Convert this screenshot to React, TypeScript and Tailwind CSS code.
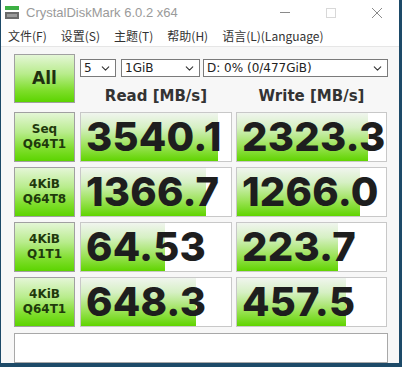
import { ChevronDown } from "lucide-react";

type Row = {
    top: string;
    bottom: string;
    read: string;
    readFill: number;
    write: string;
    writeFill: number;
};

const rows: Row[] = [
    { top: "Seq", bottom: "Q64T1", read: "3540.1", readFill: 137, write: "2323.3", writeFill: 131 },
    { top: "4KiB", bottom: "Q64T8", read: "1366.7", readFill: 125, write: "1266.0", writeFill: 123 },
    { top: "4KiB", bottom: "Q1T1", read: "64.53", readFill: 84, write: "223.7", writeFill: 101 },
    { top: "4KiB", bottom: "Q64T1", read: "648.3", readFill: 115, write: "457.5", writeFill: 109 },
];

const greenButton =
    "border border-[#a0a0a0] bg-[linear-gradient(to_bottom,#e4f6d6_0%,#b8ec8c_40%,#7fde2c_75%,#5cd400_100%)]";

const Select = ({ label, className }: { label: string; className: string }) => (
    <div
        className={`h-[18px] flex items-center justify-between border border-[#7a7a7a] bg-white pl-[3px] pr-[3px] text-[12px] text-[#222] ${className}`}
    >
        <span className="leading-none">{label}</span>
        <ChevronDown size={13} strokeWidth={2} className="text-[#333]" />
    </div>
);

const ResultBox = ({ value, fill }: { value: string; fill: number }) => (
    <div className="relative h-[50px] border border-[#c8c8c8] bg-white overflow-hidden">
        <div
            className="absolute left-0 top-0 bottom-0 bg-[linear-gradient(to_bottom,#f0f5ee_0%,#d6f0c4_30%,#9ce358_68%,#60d400_100%)]"
            style={{ width: fill }}
        />
        <div className="relative h-full flex items-center pl-[5px] font-['Inter'] font-extrabold text-[40px] tracking-[0.2px] text-[#1e1e1e] leading-none">
            {value}
        </div>
    </div>
);

const App = () => {
    return (
        <div className="w-[402px] h-[367px] bg-[#1d4a68] flex flex-col overflow-hidden">
            <div className="ml-[1px] w-[398px] h-[363px] bg-[#f7f7f7] flex flex-col">
                {/* title bar */}
                <div className="h-[25px] bg-white flex items-center">
                    <svg width="15" height="15" viewBox="0 0 15 15" className="ml-[4px]">
                        <rect x="0" y="1" width="14" height="4" fill="#3cb043" />
                        <rect x="0" y="7" width="14" height="7" fill="#6a6a6a" />
                        <rect x="2" y="9" width="10" height="3" fill="#9a9a9a" />
                    </svg>
                    <span className="ml-[6px] font-['Liberation_Sans'] text-[13px] text-[#9a9a9a]">
                        CrystalDiskMark 6.0.2 x64
                    </span>
                    <div className="ml-auto flex items-center">
                        <div className="w-[10px] h-[1px] bg-[#8a8a8a] mr-[36px]" />
                        <div className="w-[10px] h-[10px] border border-[#d8d8d8] mr-[35px]" />
                        <svg width="12" height="12" viewBox="0 0 12 12" className="mr-[16px]">
                            <path d="M1 1 L11 11 M11 1 L1 11" stroke="#8a8a8a" strokeWidth="1" />
                        </svg>
                    </div>
                </div>
                {/* menu */}
                <div className="h-[21px] bg-white flex items-center gap-[14px] pl-[7px] font-['Noto_Sans_CJK_SC',sans-serif] text-[12px] text-[#333]">
                    <span>文件(F)</span>
                    <span>设置(S)</span>
                    <span>主题(T)</span>
                    <span>帮助(H)</span>
                    <span>语言(L)(Language)</span>
                </div>
                <div className="h-[1px] bg-[#e6e6e6]" />

                {/* main */}
                <div className="flex flex-col pl-[13px] pt-[7px] font-['DejaVu_Sans',sans-serif]">
                    <div className="flex gap-[5px]">
                        <div
                            className={`w-[61px] h-[49px] flex items-center justify-center font-bold text-[17px] text-[#1f2f10] ${greenButton}`}
                        >
                            All
                        </div>
                        <div className="flex flex-col w-[308px]">
                            <div className="flex mt-[5px]">
                                <Select label="5" className="w-[36px]" />
                                <Select label="1GiB" className="w-[79px] ml-[5px]" />
                                <Select label="D: 0% (0/477GiB)" className="w-[185px] ml-[3px]" />
                            </div>
                            <div className="flex mt-[8px] font-bold text-[15px] text-[#333]">
                                <div className="w-[152px] text-center">Read [MB/s]</div>
                                <div className="w-[151px] ml-[4px] text-center">Write [MB/s]</div>
                            </div>
                        </div>
                    </div>

                    <div className="flex flex-col gap-[5px] mt-[4px]">
                        {rows.map((row, i) => (
                            <div key={i} className="flex gap-[5px]">
                                <div
                                    className={`w-[61px] h-[50px] flex flex-col items-center justify-center font-bold text-[12px] leading-[15px] text-[#1f3a0c] ${greenButton}`}
                                >
                                    <span>{row.top}</span>
                                    <span>{row.bottom}</span>
                                </div>
                                <div className="w-[152px]">
                                    <ResultBox value={row.read} fill={row.readFill} />
                                </div>
                                <div className="w-[151px] ml-[-1px]">
                                    <ResultBox value={row.write} fill={row.writeFill} />
                                </div>
                            </div>
                        ))}
                    </div>

                    <div className="w-[374px] h-[30px] mt-[6px] border border-[#a8a8a8] bg-white" />
                </div>
            </div>
        </div>
    );
};

export default App;
